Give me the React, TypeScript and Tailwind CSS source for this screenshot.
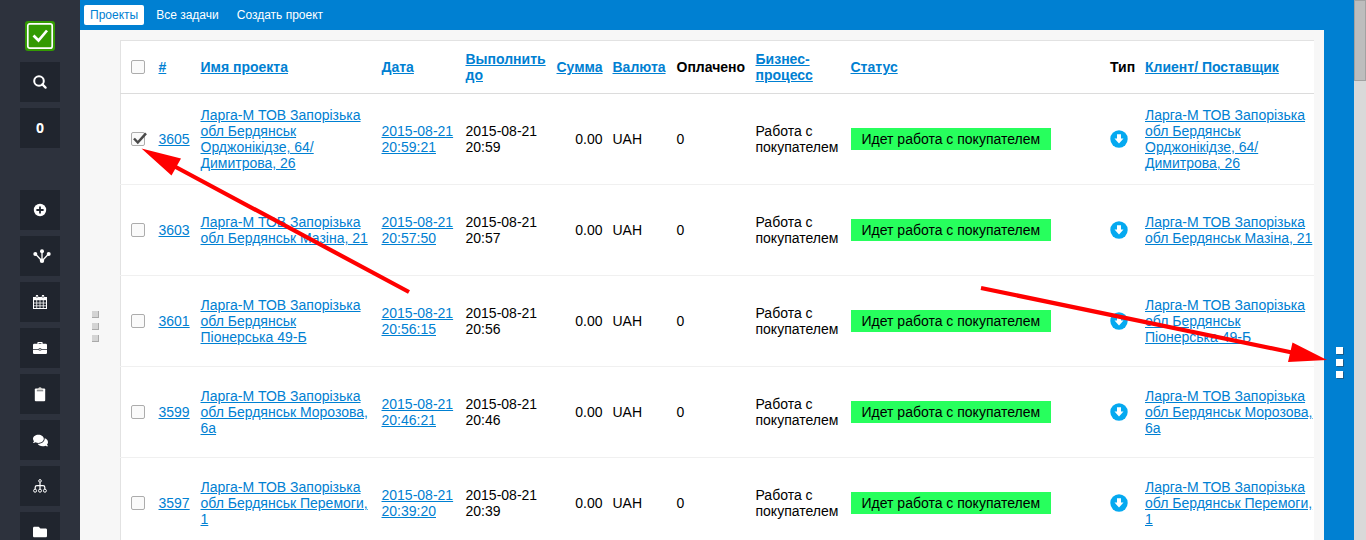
import type { ReactNode } from "react";
import { FaComments, FaFolder } from "react-icons/fa";

type Project = {
  id: string;
  name: string;
  created: [string, string];
  due: [string, string];
  checked?: boolean;
};

const projects: Project[] = [
  { id: "3605", name: "Ларга-М ТОВ Запорізька обл Бердянськ Орджонікідзе, 64/ Димитрова, 26", created: ["2015-08-21", "20:59:21"], due: ["2015-08-21", "20:59"], checked: true },
  { id: "3603", name: "Ларга-М ТОВ Запорізька обл Бердянськ Мазіна, 21", created: ["2015-08-21", "20:57:50"], due: ["2015-08-21", "20:57"] },
  { id: "3601", name: "Ларга-М ТОВ Запорізька обл Бердянськ Піонерська 49-Б", created: ["2015-08-21", "20:56:15"], due: ["2015-08-21", "20:56"] },
  { id: "3599", name: "Ларга-М ТОВ Запорізька обл Бердянськ Морозова, 6а", created: ["2015-08-21", "20:46:21"], due: ["2015-08-21", "20:46"] },
  { id: "3597", name: "Ларга-М ТОВ Запорізька обл Бердянськ Перемоги, 1", created: ["2015-08-21", "20:39:20"], due: ["2015-08-21", "20:39"] },
];

function SearchIcon() {
  return (
    <svg width="14" height="14" viewBox="0 0 14 14" fill="none" stroke="currentColor" strokeWidth="2">
      <circle cx="6" cy="6" r="4.8" />
      <path d="M9.4 9.4 12.6 12.6" strokeWidth="2.2" strokeLinecap="round" />
    </svg>
  );
}

function PlusIcon() {
  return (
    <svg width="14" height="14" viewBox="0 0 14 14" fill="none">
      <circle cx="7" cy="7" r="6.200" fill="currentColor" />
      <path d="M7 3.400V10.600M3.400 7H10.600" stroke="#20252e" strokeWidth="1.800" />
    </svg>
  );
}

function NodesIcon() {
  return (
    <svg width="18" height="14" viewBox="0 0 18 14" fill="currentColor" className="ml-1">
      <path d="M2.5 5 9 12 15.5 5M9 2.500V12" fill="none" stroke="currentColor" strokeWidth="1.3" />
      <circle cx="2.3" cy="5" r="2" />
      <circle cx="9" cy="2.200" r="2" />
      <circle cx="15.700" cy="5" r="2" />
      <circle cx="9" cy="11.700" r="2.200" />
    </svg>
  );
}

function CalendarIcon() {
  return (
    <svg width="14" height="14" viewBox="0 0 14 14" fill="none" stroke="currentColor">
      <rect x="0.5" y="2.500" width="13" height="11" />
      <path d="M0.5 4H13.500" strokeWidth="2.400" />
      <path d="M3.700 5V13.500M7 5V13.500M10.300 5V13.500M0.500 8H13.500M0.500 10.800H13.500" strokeWidth="0.800" />
      <path d="M4 1V3.200M10 1V3.200" strokeWidth="2.400" strokeLinecap="round" />
      <path d="M4 1V3M10 1V3" stroke="#20252e" strokeWidth="0.700" />
    </svg>
  );
}

function BriefcaseIcon() {
  return (
    <svg width="14" height="14" viewBox="0 0 14 14" fill="currentColor">
      <path d="M5 3V1.500H9V3" fill="none" stroke="currentColor" strokeWidth="1.200" strokeLinejoin="round" />
      <path d="M1.200 2.800H12.800Q14 2.800 14 4V8H8.200V7.200H5.800V8H0V4Q0 2.800 1.200 2.800Z" />
      <path d="M0 8.700H5.800V9.600H8.200V8.700H14V12Q14 13 12.800 13H1.200Q0 13 0 12Z" />
      <rect x="6.400" y="7.800" width="1.200" height="1.200" />
    </svg>
  );
}

function ClipboardIcon() {
  return (
    <svg width="12" height="16" viewBox="0 0 12 16" fill="currentColor">
      <path d="M1.800 2.500H10.200Q11.200 2.500 11.200 3.500V14.200Q11.200 15.200 10.200 15.200H1.800Q0.800 15.200 0.800 14.200V3.500Q0.800 2.500 1.800 2.500Z" />
      <path d="M2.800 4.800Q2.800 2.900 4.400 2.600Q4.600 1.200 6 1.200T7.600 2.600Q9.200 2.900 9.200 4.800Z" fill="#d8d8d4" />
      <path d="M2.800 4.800H9.200" stroke="#20252e" strokeWidth="0.600" />
    </svg>
  );
}

function SitemapIcon() {
  return (
    <svg width="14" height="14" viewBox="0 0 14 14" fill="none" stroke="currentColor" strokeWidth="1">
      <circle cx="7" cy="1.900" r="1.300" />
      <path d="M7 3.200V10.200M2.200 10V8.200Q2.200 6.700 4 6.700H10Q11.800 6.700 11.800 8.200V10" strokeWidth="1.200" />
      <circle cx="2.100" cy="11.700" r="1.500" />
      <circle cx="7" cy="11.700" r="1.500" />
      <circle cx="11.900" cy="11.700" r="1.500" />
    </svg>
  );
}

function DownIcon() {
  return (
    <svg width="18" height="18" viewBox="0 0 18 18" role="img" aria-label="Клиент">
      <circle cx="9" cy="9" r="8.700" fill="#05a9f0" />
      <path d="M7 4.200H11V8.500H13.500L9 13.600 4.500 8.500H7Z" fill="#fff" />
    </svg>
  );
}

function SideButton({ label, children }: { label: string; children: ReactNode }) {
  return (
    <button aria-label={label} className="flex h-10 w-10 shrink-0 items-center justify-center bg-[#20252e] font-['Open_Sans',sans-serif] text-sm font-bold text-white">
      {children}
    </button>
  );
}

function Check({ label, checked = false }: { label: string; checked?: boolean }) {
  return (
    <label className="relative block h-3.5 w-3.5">
      <input type="checkbox" aria-label={label} defaultChecked={checked} className="peer block h-3.5 w-3.5 appearance-none rounded-xs border border-[#acacac] bg-[#fafafa]" />
      <svg viewBox="0 0 16 14" className="pointer-events-none absolute top-0 left-0.5 hidden h-3.5 w-4 peer-checked:block" fill="none" stroke="#4a4a4a">
        <path d="M1 6.500 4.800 10.500 13 1.300" strokeWidth="2.500" />
      </svg>
    </label>
  );
}

function Link({ children }: { children: ReactNode }) {
  return (
    <a href="#" className="text-[#0080d2] underline">
      {children}
    </a>
  );
}

function Grip({ tone }: { tone: string }) {
  return (
    <div className="flex flex-col gap-[5px]">
      <span className={tone} />
      <span className={tone} />
      <span className={tone} />
    </div>
  );
}

function Arrows() {
  return (
    <svg width="1366" height="540" viewBox="0 0 1366 540" className="pointer-events-none absolute top-0 left-0" fill="#f00" stroke="#f00" aria-hidden="true">
      <path d="M409 292 172 165M981 288 1292 352.500" strokeWidth="4.200" />
      <path d="M141.500 148.500 181 158.500 171.500 175.500ZM1327 360 1292.500 342.500 1288 362Z" stroke="none" />
    </svg>
  );
}

const cell = "px-[5px] py-0";

export default function App() {
  return (
    <div className="relative flex h-screen overflow-hidden bg-[#f7f7f7] font-['Liberation_Sans',Arial,sans-serif] text-sm leading-4 text-black">
      <aside className="flex w-20 shrink-0 flex-col items-center bg-[#2d323d] pt-[21px]">
        <a href="#" aria-label="Главная" className="mb-[11px] shrink-0">
          <svg width="30" height="30" viewBox="0 0 30 30" fill="none">
            <rect width="30" height="30" rx="3" fill="#339a02" />
            <rect x="2.800" y="2.800" width="24.400" height="24.400" rx="2" stroke="#fff" strokeWidth="1.700" />
            <path d="M8.500 14.500 13.500 19.500 22 9.500" stroke="#fff" strokeWidth="2.700" />
          </svg>
        </a>
        <div className="flex flex-col gap-1.5">
          <SideButton label="Поиск"><SearchIcon /></SideButton>
          <SideButton label="Уведомления">0</SideButton>
        </div>
        <nav className="mt-[42px] flex flex-col gap-1.5">
          <SideButton label="Добавить"><PlusIcon /></SideButton>
          <SideButton label="Процессы"><NodesIcon /></SideButton>
          <SideButton label="Календарь"><CalendarIcon /></SideButton>
          <SideButton label="Проекты"><BriefcaseIcon /></SideButton>
          <SideButton label="Задачи"><ClipboardIcon /></SideButton>
          <SideButton label="Сообщения"><FaComments size={15} /></SideButton>
          <SideButton label="Структура"><SitemapIcon /></SideButton>
          <SideButton label="Файлы"><FaFolder size={14} /></SideButton>
        </nav>
      </aside>

      <div className="flex min-w-0 flex-1 flex-col">
        <nav className="flex h-[30px] shrink-0 items-center gap-1.5 bg-[#0080d2] px-1 text-xs text-white">
          <a href="#" className="rounded-xs bg-white px-1.5 py-0.5 text-[#0080d2]">Проекты</a>
          <a href="#" className="px-1.5 py-0.5">Все задачи</a>
          <a href="#" className="px-1.5 py-0.5">Создать проект</a>
        </nav>
        <div className="flex min-h-0 flex-1">
          <div className="w-10 shrink-0 pt-[281px] pl-3">
            <Grip tone="block h-[7px] w-[7px] border-r border-b border-[#aaa] bg-[#d4d4d4]" />
          </div>
          <main className="min-w-0 flex-1 overflow-hidden pt-2.5">
            <table className="w-full table-fixed border-collapse border-t border-l border-[#e2e2e2] bg-white text-left">
              <colgroup>
                <col className="w-[33px]" />
                <col className="w-[42px]" />
                <col className="w-[181px]" />
                <col className="w-[84px]" />
                <col className="w-[91px]" />
                <col className="w-14" />
                <col className="w-16" />
                <col className="w-[79px]" />
                <col className="w-[95px]" />
                <col />
                <col className="w-[35px]" />
                <col className="w-[174px]" />
              </colgroup>
              <thead>
                <tr className="h-[53px] border-b border-[#dcdcdc]">
                  <th className="py-0 pl-2.5"><Check label="Выбрать все" /></th>
                  <th className={cell}><Link>#</Link></th>
                  <th className={cell}><Link>Имя проекта</Link></th>
                  <th className={cell}><Link>Дата</Link></th>
                  <th className={cell}><Link>Выполнить<br />до</Link></th>
                  <th className={cell}><Link>Сумма</Link></th>
                  <th className={cell}><Link>Валюта</Link></th>
                  <th className={cell}>Оплачено</th>
                  <th className={cell}><Link>Бизнес-<br />процесс</Link></th>
                  <th className={cell}><Link>Статус</Link></th>
                  <th className={cell}>Тип</th>
                  <th className="pl-[5px]"><Link>Клиент/ Поставщик</Link></th>
                </tr>
              </thead>
              <tbody>
                {projects.map((p) => (
                  <tr key={p.id} className="h-[91px] border-b border-[#f0f0f0]">
                    <td className="py-0 pl-2.5"><Check label={p.id} checked={p.checked} /></td>
                    <td className={cell}><Link>{p.id}</Link></td>
                    <td className={cell}><Link>{p.name}</Link></td>
                    <td className={cell}><Link>{p.created[0]}<br />{p.created[1]}</Link></td>
                    <td className={cell}>{p.due[0]}<br />{p.due[1]}</td>
                    <td className="px-[5px] text-right">0.00</td>
                    <td className={cell}>UAH</td>
                    <td className={cell}>0</td>
                    <td className={cell}>Работа с<br />покупателем</td>
                    <td className={cell}>
                      <span className="inline-block bg-[#27ff5d] px-[11px] py-[3px] whitespace-nowrap">Идет работа с покупателем</span>
                    </td>
                    <td className={cell}><DownIcon /></td>
                    <td className="pl-[5px]"><Link>{p.name}</Link></td>
                  </tr>
                ))}
              </tbody>
            </table>
          </main>
          <div className="w-2.5 shrink-0" />
        </div>
      </div>

      <div className="w-[30px] shrink-0 bg-[#0080d2] pt-[347px] pl-3">
        <Grip tone="block h-[7px] w-[7px] bg-white shadow-[1px_1px_0_#1a5c8a]" />
      </div>
      <div className="w-3 shrink-0 bg-[#d9d9d9]">
        <div className="h-[81px] border border-[#a2a2a2] bg-[#bdbdbd]" />
      </div>
      <Arrows />
    </div>
  );
}
